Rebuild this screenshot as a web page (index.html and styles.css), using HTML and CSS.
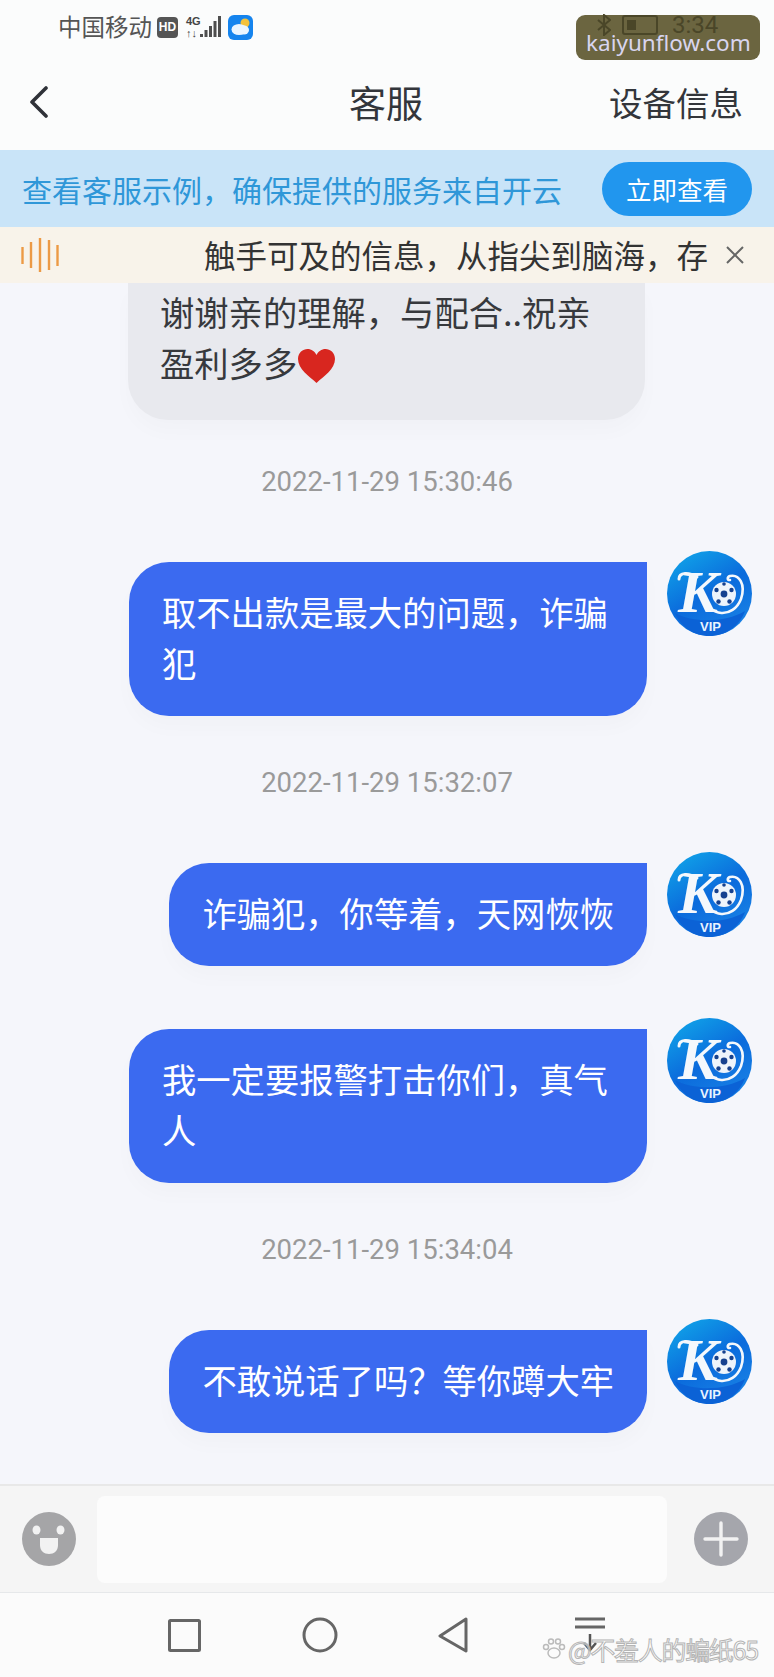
FILE: index.html
```html
<!DOCTYPE html>
<html lang="zh-CN">

<head>
  <meta charset="UTF-8" />
  <title>客服</title>
  <link rel="stylesheet" href="styles.css">
</head>

<body>
  <!-- 头像,下面用 use 复用 -->
  <svg class="defs" width="0" height="0">
    <defs>
      <linearGradient id="avatarBg" x1="0.2" y1="0" x2="0.8" y2="1">
        <stop offset="0" stop-color="#10a2e8" />
        <stop offset="0.5" stop-color="#0b6bdc" />
        <stop offset="1" stop-color="#1a84e6" />
      </linearGradient>
      <symbol id="avatar" viewBox="0 0 85 85">
        <circle cx="42.5" cy="42.5" r="42.5" fill="url(#avatarBg)" />
        <path d="M8 62 C26 72 58 72 78 60 C72 76 58 85 42.500 85 C27 85 14 76 8 62 Z" fill="#0b62d6" />
        <text x="11" y="61" class="avatar-k">K</text>
        <path d="M12 28 C12 21 22 21 30 26" fill="none" stroke="#f4f8fc" stroke-width="3" stroke-linecap="round" />
        <path d="M37 46 C42 66 66 68 74 48 C79 33 72 23 63 25 C60 26 60 29 63 29" fill="none" stroke="#f4f8fc" stroke-width="2.600" stroke-linecap="round" />
        <circle cx="57" cy="43" r="12" fill="#eef4fb" />
        <circle cx="57" cy="43" r="3.400" fill="#16418f" />
        <circle cx="49.500" cy="39" r="2.200" fill="#16418f" />
        <circle cx="64.500" cy="39" r="2.200" fill="#16418f" />
        <circle cx="51.500" cy="50.500" r="2.200" fill="#16418f" />
        <circle cx="62.500" cy="50.500" r="2.200" fill="#16418f" />
        <circle cx="57" cy="33" r="1.800" fill="#16418f" />
        <text x="43.500" y="80" text-anchor="middle" class="avatar-vip">VIP</text>
      </symbol>
    </defs>
  </svg>

  <div class="app">
    <header class="header">
      <div class="status">
        <span class="carrier">中国移动</span>
        <span class="hd">HD</span>
        <span class="net">
          <span class="net-text">4G<br>↑↓</span>
          <svg width="21" height="24" viewBox="0 0 21 24" fill="#4e4e4e">
            <rect x="0" y="19" width="3" height="3" />
            <rect x="4.500" y="15" width="3" height="7" />
            <rect x="9" y="11" width="3" height="11" />
            <rect x="13.500" y="6" width="3" height="16" />
            <rect x="18" y="1" width="3" height="21" />
          </svg>
        </span>
        <svg class="weather" width="25" height="25" viewBox="0 0 25 25">
          <rect width="25" height="25" rx="6" fill="#1584ee" />
          <circle cx="17" cy="8" r="4.500" fill="#f4c23c" />
          <ellipse cx="11" cy="14.500" rx="7.500" ry="5.500" fill="#eaf5ff" />
          <ellipse cx="16" cy="15" rx="5" ry="4.500" fill="#eaf5ff" />
        </svg>
      </div>
      <div class="topbar">
        <svg class="back" width="20" height="32" viewBox="0 0 20 32">
          <path d="M17 2 L3 16 L17 30" fill="none" stroke="#2f3238" stroke-width="3.600" stroke-linecap="round" stroke-linejoin="round" />
        </svg>
        <h1 class="title">客服</h1>
        <span class="device">设备信息</span>
      </div>
    </header>

    <!-- 水印盖在状态栏右边 -->
    <div class="stamp">
      <div class="stamp-status">
        <svg width="14" height="22" viewBox="0 0 14 22">
          <path d="M1 6 L13 16 L7 21 L7 1 L13 6 L1 16" fill="none" stroke="#4a4628" stroke-width="2" />
        </svg>
        <span class="battery"><i></i></span>
        <span class="clock">3:34</span>
      </div>
      <span class="stamp-text">kaiyunflow.com</span>
    </div>

    <div class="notice">
      <span class="notice-text">查看客服示例，确保提供的服务来自开云</span>
      <span class="notice-btn">立即查看</span>
    </div>

    <div class="marquee">
      <svg class="wave" width="38" height="36" viewBox="0 0 38 36" stroke="#ec9a45" stroke-width="2.400">
        <line x1="1.500" y1="10" x2="1.500" y2="27" />
        <line x1="10" y1="5" x2="10" y2="31" />
        <line x1="19" y1="1" x2="19" y2="35" />
        <line x1="28" y1="3" x2="28" y2="33" />
        <line x1="36.500" y1="8" x2="36.500" y2="29" />
      </svg>
      <div class="marquee-box">
        <span class="marquee-text">触手可及的信息，从指尖到脑海，存</span>
      </div>
      <svg class="close" width="18" height="18" viewBox="0 0 18 18">
        <path d="M1 1 L17 17 M17 1 L1 17" stroke="#666" stroke-width="2" />
      </svg>
    </div>

    <main class="messages">
      <div class="other">
        <p>谢谢亲的理解，与配合..祝亲盈利多多<svg class="heart" width="39" height="36" viewBox="0 0 39 36">
            <path d="M19.500 35 C12 28 1 21 1 11 C1 4.500 6 1 10.500 1 C14.500 1 17.800 3.500 19.500 7 C21.200 3.500 24.500 1 28.500 1 C33 1 38 4.500 38 11 C38 21 27 28 19.500 35 Z" fill="#d8261f" />
          </svg></p>
      </div>

      <div class="time">2022-11-29 15:30:46</div>
      <div class="row">
        <div class="self">取不出款是最大的问题，诈骗犯</div>
        <svg class="avatar"><use href="#avatar" /></svg>
      </div>

      <div class="time">2022-11-29 15:32:07</div>
      <div class="row">
        <div class="self">诈骗犯，你等着，天网恢恢</div>
        <svg class="avatar"><use href="#avatar" /></svg>
      </div>

      <div class="row row-next">
        <div class="self">我一定要报警打击你们，真气人</div>
        <svg class="avatar"><use href="#avatar" /></svg>
      </div>

      <div class="time">2022-11-29 15:34:04</div>
      <div class="row">
        <div class="self">不敢说话了吗？等你蹲大牢</div>
        <svg class="avatar"><use href="#avatar" /></svg>
      </div>
    </main>

    <div class="form">
      <svg class="round-btn" viewBox="0 0 54 54">
        <circle cx="27" cy="27" r="27" fill="#a5a5a7" />
        <ellipse cx="14.500" cy="18" rx="4" ry="4.500" fill="#f2f2f2" />
        <ellipse cx="38.500" cy="18" rx="4" ry="4.500" fill="#f2f2f2" />
        <path d="M18 26 H36 V33 C36 39 32 42 27 42 C22 42 18 39 18 33 Z" fill="#f2f2f2" />
      </svg>
      <div class="input"></div>
      <svg class="round-btn" viewBox="0 0 54 54">
        <circle cx="27" cy="27" r="27" fill="#a5a6ac" />
        <path d="M27 11 V43 M11 27 H43" stroke="#f2f2f2" stroke-width="3.400" stroke-linecap="round" />
      </svg>
    </div>

    <nav class="nav">
      <div class="nav-item">
        <svg width="33" height="33" viewBox="0 0 33 33">
          <rect x="1.500" y="1.500" width="30" height="30" rx="1" fill="none" stroke="#666" stroke-width="3" />
        </svg>
      </div>
      <div class="nav-item">
        <svg width="36" height="36" viewBox="0 0 36 36">
          <circle cx="18" cy="18" r="16" fill="none" stroke="#666" stroke-width="3" />
        </svg>
      </div>
      <div class="nav-item nav-back">
        <svg width="30" height="36" viewBox="0 0 30 36">
          <path d="M28 2 L2 19 L28 34 Z" fill="none" stroke="#666" stroke-width="3" stroke-linejoin="round" />
        </svg>
      </div>
      <div class="nav-item">
        <svg width="30" height="36" viewBox="0 0 30 36">
          <path d="M0 2 H30 M0 10 H30" stroke="#666" stroke-width="3" />
          <path d="M15 17 V33 M9 26 L15 33 L21 26" fill="none" stroke="#555" stroke-width="2.500" />
        </svg>
      </div>
    </nav>

    <!-- 右下角水印 -->
    <div class="mark">
      <svg width="24" height="24" viewBox="0 0 24 24" fill="none" stroke="#bbb" stroke-width="1.500">
        <ellipse cx="12" cy="16" rx="6" ry="5" />
        <circle cx="4" cy="10" r="2.500" />
        <circle cx="9" cy="4.500" r="2.500" />
        <circle cx="16" cy="4.500" r="2.500" />
        <circle cx="20" cy="10" r="2.500" />
      </svg>
      <span class="mark-text">@不羞人的蝙纸65</span>
    </div>
  </div>
</body>

</html>
```

FILE: styles.css
```css
* {
  box-sizing: border-box;
}

body {
  margin: 0;
  padding: 0;
  background-color: #f5f6fb;
  font-family: "Noto Sans CJK SC", "Noto Sans", sans-serif;
}

.defs {
  position: absolute;
}

.app {
  position: relative;
  display: flex;
  flex-direction: column;
  width: 774px;
  height: 1677px;
  overflow: hidden;
}

/* 顶部 */
.header {
  height: 150px;
  background-color: #fbfcfc;
}

.status {
  display: flex;
  align-items: center;
  height: 54px;
  padding-left: 58px;
}

.carrier {
  font-size: 23.500px;
  line-height: 1;
  color: #555;
}

.hd {
  width: 21px;
  height: 21px;
  margin-left: 5px;
  border-radius: 4px;
  background-color: #555;
  color: #fff;
  font-family: "Liberation Sans", sans-serif;
  font-size: 12px;
  font-weight: bold;
  line-height: 21px;
  text-align: center;
}

.net {
  display: flex;
  align-items: center;
  margin-left: 8px;
}

.net-text {
  width: 14px;
  color: #444;
  font-family: "Liberation Sans", sans-serif;
  font-size: 11px;
  font-weight: bold;
  line-height: 12px;
}

.weather {
  margin-left: 7px;
}

.topbar {
  display: grid;
  grid-template-columns: 1fr auto 1fr;
  align-items: center;
  height: 96px;
  padding: 0 31px 0 29px;
}

.title {
  margin: 0;
  font-size: 37px;
  font-weight: 400;
  line-height: 1;
  color: #33363b;
}

.device {
  justify-self: end;
  font-size: 33.500px;
  line-height: 1;
  color: #33363b;
}

.stamp {
  position: absolute;
  top: 15px;
  left: 576px;
  width: 184px;
  height: 45px;
  padding: 0 0 0 10px;
  border-radius: 9px;
  background-color: #6b6540;
}

.stamp-status {
  display: flex;
  align-items: center;
  height: 20px;
  margin-bottom: -8px;
  padding-left: 11px;
}

.battery {
  width: 36px;
  height: 20px;
  margin-left: 11px;
  padding: 3px;
  border: 2px solid #4a4628;
  border-radius: 3px;
}

.battery i {
  display: block;
  width: 9px;
  height: 100%;
  background-color: #4a4628;
}

.clock {
  margin-left: 14px;
  color: #4a4628;
  font-family: "Roboto", sans-serif;
  font-size: 24px;
  line-height: 20px;
}

.stamp-text {
  display: block;
  color: #d9d5ef;
  font-family: "Noto Sans", sans-serif;
  font-size: 22.500px;
  line-height: 32px;
}

/* 蓝色提示条 */
.notice {
  display: flex;
  align-items: center;
  justify-content: space-between;
  height: 77px;
  padding: 0 22px;
  background-color: #c9e4f8;
}

.notice-text {
  font-size: 30px;
  line-height: 1;
  color: #2f97d8;
}

.notice-btn {
  width: 150px;
  height: 54px;
  border-radius: 27px;
  background-color: #2196ee;
  color: #fff;
  font-size: 25.500px;
  line-height: 54px;
  text-align: center;
}

/* 滚动公告 */
.marquee {
  display: flex;
  align-items: center;
  height: 56px;
  padding: 0 30px 0 21px;
  background-color: #f8f3ea;
}

.marquee-box {
  flex: 1;
  margin-left: 145px;
  white-space: nowrap;
}

.marquee-text {
  font-size: 31.500px;
  line-height: 1.2;
  color: #333;
}

.close {
  margin-left: 16px;
}

/* 聊天内容 */
.messages {
  flex: 1;
  overflow: hidden;
}

.other {
  width: 517px;
  height: 137px;
  margin-left: 128px;
  margin-bottom: -5px;
  padding: 3px 32px 0;
  border-radius: 0 0 40px 40px;
  background-color: #e8e9ee;
  box-shadow: 0 12px 20px rgba(0, 0, 0, 0.02);
}

.other p {
  margin: 0;
  font-size: 34.300px;
  line-height: 51px;
  color: #37393d;
}

.heart {
  vertical-align: -7px;
}

.time {
  height: 40px;
  margin: 47px 0 49px;
  font-family: "Roboto", sans-serif;
  font-size: 27.500px;
  line-height: 40px;
  color: #9a9a9a;
  text-align: center;
}

.row {
  display: flex;
  justify-content: flex-end;
  align-items: flex-start;
  gap: 20px;
  padding-right: 22px;
}

.row-next {
  margin-top: 52px;
}

.self {
  max-width: 518px;
  margin-top: 11px;
  padding: 24px 33px 28px;
  border-radius: 40px 0 40px 40px;
  background-color: #3b6af0;
  box-shadow: 0 12px 20px rgba(0, 0, 0, 0.02);
  color: #fff;
  font-size: 34.300px;
  line-height: 51px;
}

.avatar {
  flex-shrink: 0;
  width: 85px;
  height: 85px;
}

.avatar-k {
  fill: #f4f8fc;
  font-family: "Liberation Serif", serif;
  font-size: 60px;
  font-style: italic;
  font-weight: bold;
}

.avatar-vip {
  fill: #e8f4ff;
  font-family: "Liberation Sans", sans-serif;
  font-size: 13px;
  font-weight: bold;
}

/* 输入框 */
.form {
  display: flex;
  align-items: center;
  height: 109px;
  padding-left: 22px;
  border-top: 2px solid #e8e8e8;
  border-bottom: 1px solid #e6e8ea;
  background-color: #f5f5f5;
}

.round-btn {
  width: 54px;
  height: 54px;
}

.input {
  width: 570px;
  height: 87px;
  margin: 0 27px 0 21px;
  border-radius: 8px;
  background-color: #fcfcfc;
}

/* 底部导航 */
.nav {
  display: flex;
  justify-content: center;
  align-items: center;
  height: 84px;
  background-color: #fbfbfb;
}

.nav-item {
  display: flex;
  justify-content: center;
  width: 135px;
}

.nav-back {
  padding-right: 3px;
}

.mark {
  position: absolute;
  top: 1634px;
  left: 542px;
  display: flex;
  align-items: center;
  gap: 2px;
}

.mark-text {
  color: rgba(255, 255, 255, 0.5);
  font-size: 25px;
  line-height: 30px;
  letter-spacing: -1.300px;
  -webkit-text-stroke: 1px #b5b5b5;
}
```
